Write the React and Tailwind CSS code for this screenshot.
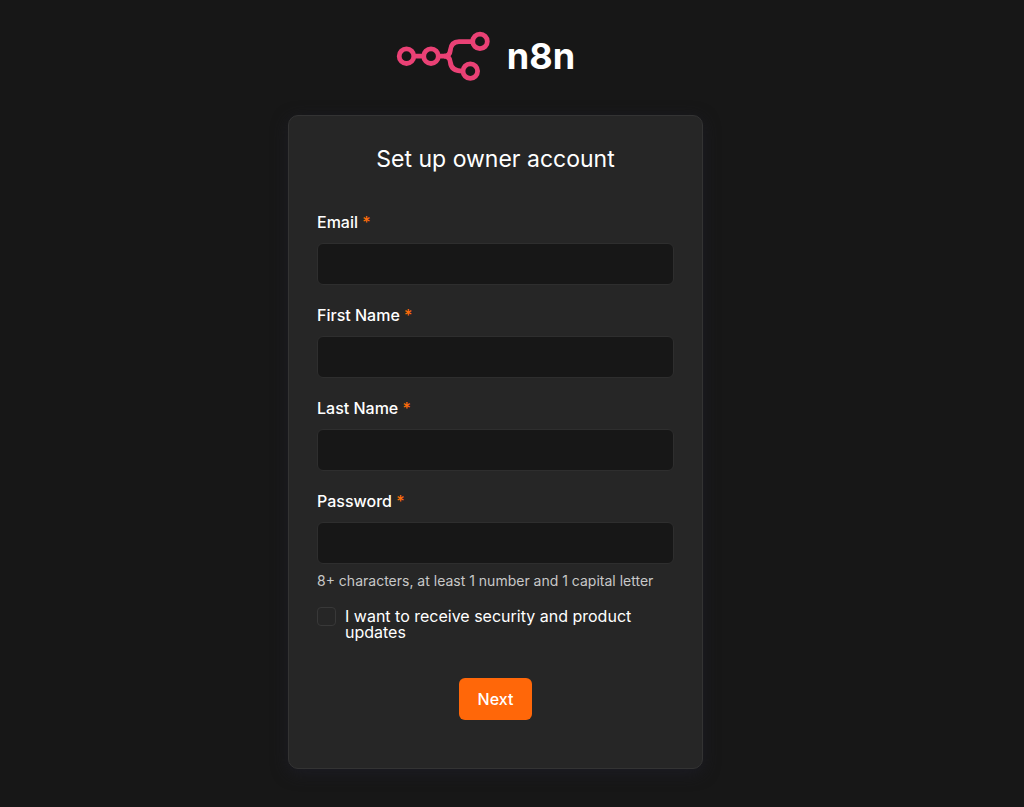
import React, { useState } from 'react';

const fields = [
  { id: 'email', label: 'Email', type: 'email' },
  { id: 'firstName', label: 'First Name', type: 'text' },
  { id: 'lastName', label: 'Last Name', type: 'text' },
  { id: 'password', label: 'Password', type: 'password', hint: '8+ characters, at least 1 number and 1 capital letter' },
];

const Logo = () => (
  <div className="flex items-center gap-4">
    <svg width="95" height="51" viewBox="0 0 95 51" fill="none" stroke="#ea4175" strokeWidth="4.8" aria-hidden="true">
      <circle cx="10.5" cy="25.2" r="7.3" />
      <circle cx="35" cy="25.2" r="7.3" />
      <circle cx="84" cy="10.4" r="7.3" />
      <circle cx="74.3" cy="40.1" r="7.3" />
      <path d="M18 25.2H27.5M42.5 25.2H48C52 25.2 54 23 54.3 19.5C54.8 14 57 10.6 63 10.6H76.5" />
      <path d="M48 25.2C52 25.2 54 27.4 54.3 31C54.8 36.5 58 40.1 66.5 40.1" />
    </svg>
    <span className="text-4xl font-bold text-white">n8n</span>
  </div>
);

const App = () => {
  const [values, setValues] = useState({ email: '', firstName: '', lastName: '', password: '' });
  const [agree, setAgree] = useState(false);

  const handleChange = (e) => {
    setValues({ ...values, [e.target.name]: e.target.value });
  };

  return (
    <div className="flex min-h-screen flex-col items-center bg-[#171717] pt-8 pr-[33px] pb-9 font-['Inter',sans-serif] text-white">
      <div className="flex h-12 items-center pr-5">
        <Logo />
      </div>
      <form
        onSubmit={(e) => e.preventDefault()}
        className="mt-[35px] flex w-full max-w-[415px] flex-col rounded-[10px] border border-[#333333] bg-[#262626] px-7 pt-7 pb-12 shadow-[0_4px_16px_#1c1c24]"
      >
        <h1 className="text-center text-[23px] leading-[30px]">Set up owner account</h1>
        <div className="mt-9 flex flex-col gap-[18px]">
          {fields.map((field) => (
            <div key={field.id} className="flex flex-col">
              <label htmlFor={field.id} className="text-base leading-6 font-medium">
                {field.label} <span className="text-[#ff6d0a]">*</span>
              </label>
              <input
                id={field.id}
                name={field.id}
                type={field.type}
                value={values[field.id]}
                onChange={handleChange}
                required
                className="mt-[9px] h-[42px] w-full rounded-md border border-[#2e2e2e] bg-[#171717] px-3 outline-none"
              />
              {field.hint && <p className="mt-2 text-sm leading-[18px] text-[#c8c8c8]">{field.hint}</p>}
            </div>
          ))}
        </div>
        <div className="mt-[17px] flex items-start gap-[9px]">
          <input
            id="agree"
            type="checkbox"
            checked={agree}
            onChange={(e) => setAgree(e.target.checked)}
            className="size-[19px] shrink-0 appearance-none rounded border border-[#383838] bg-[#262626] checked:bg-[#ff6d0a]"
          />
          <label htmlFor="agree" className="pt-px text-base leading-4">
            I want to receive security and product updates
          </label>
        </div>
        <button type="submit" className="mt-[38px] h-[42px] self-center rounded-md bg-[#ff6709] px-[19px] text-base font-medium">
          Next
        </button>
      </form>
    </div>
  );
};

export default App;
